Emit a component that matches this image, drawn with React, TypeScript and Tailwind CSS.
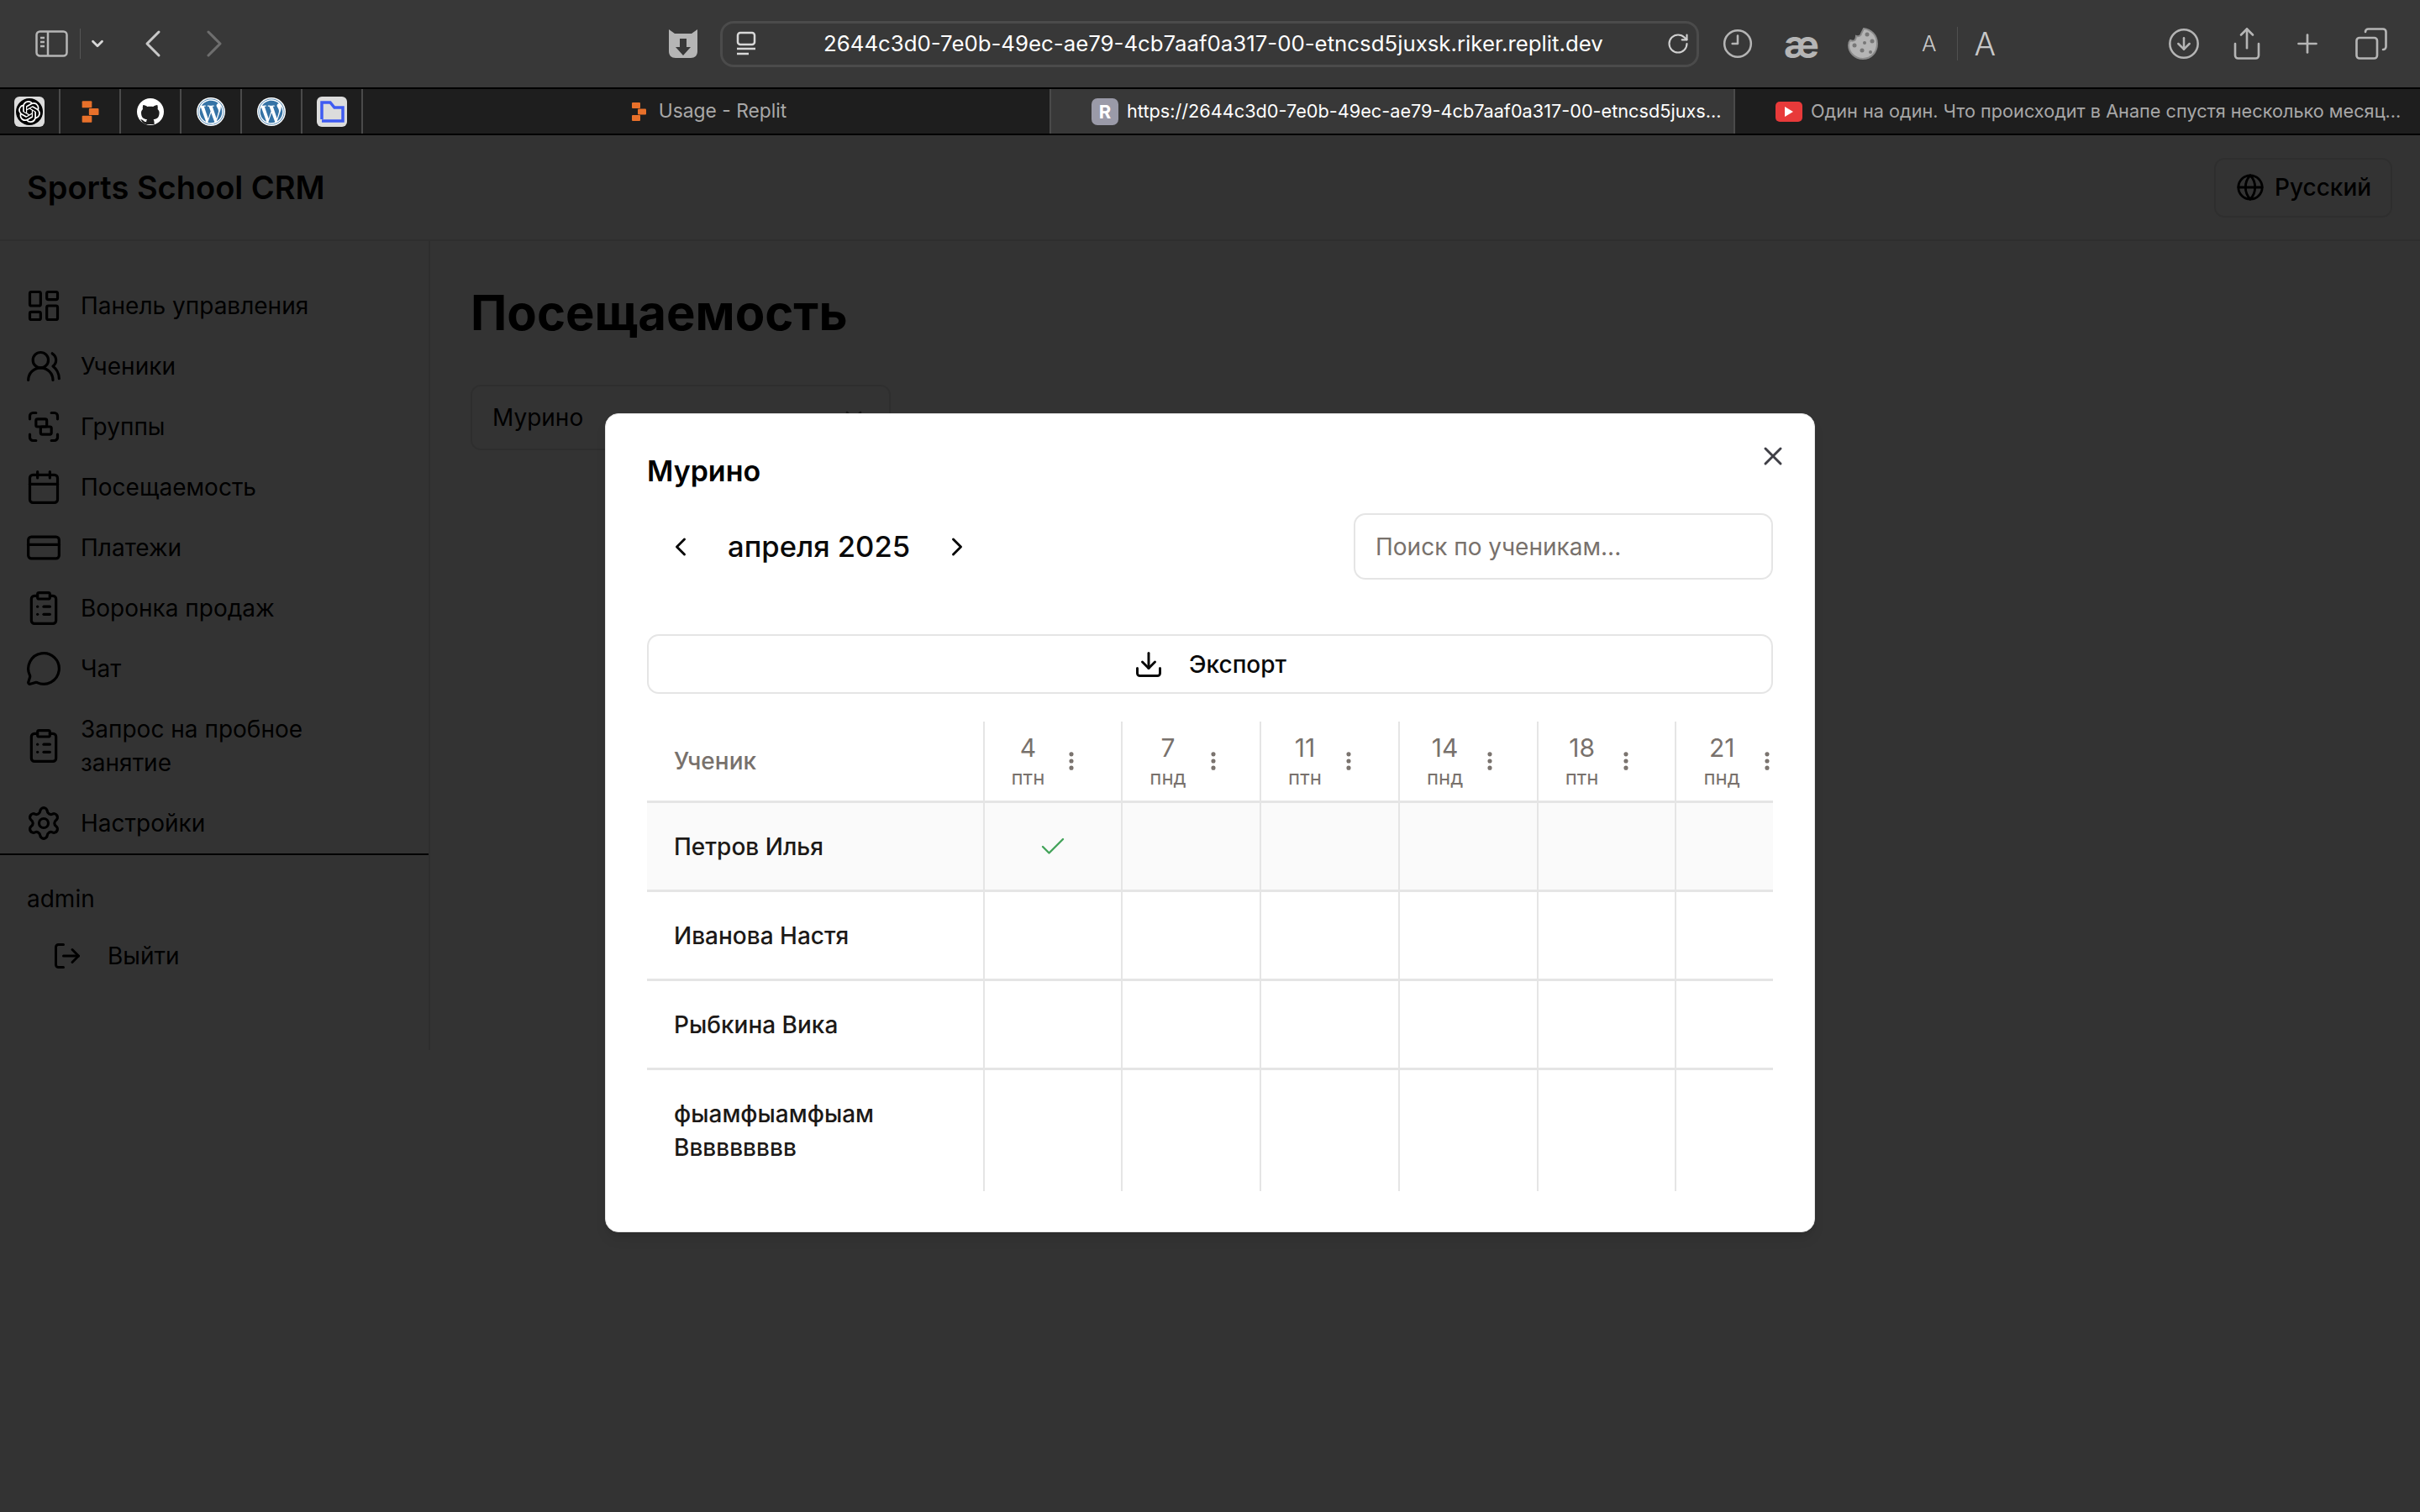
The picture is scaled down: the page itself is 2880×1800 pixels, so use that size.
import React from "react";
import {
  LayoutDashboard, UsersRound, Group, Calendar, CreditCard, ClipboardList, MessageCircle, Settings, LogOut, Globe,
  Download, MoreVertical, X, ChevronLeft, ChevronRight, ChevronDown, Check, RotateCw, Clock3, CircleArrowDown, Share, Plus, Copy,
} from "lucide-react";
import { FaWordpress } from "react-icons/fa";
import { SiOpenai } from "react-icons/si";

const font = { fontFamily: "Inter, 'Noto Sans', sans-serif" };

function ReplitIcon({ size = 24 }: { size?: number }) {
  return (
    <svg width={size} height={size} viewBox="0 0 24 24">
      <rect x="4" y="1" width="10" height="7" rx="1" fill="#e8702a" />
      <rect x="11" y="8.5" width="10" height="7" rx="1" fill="#e8702a" />
      <rect x="4" y="16" width="10" height="7" rx="1" fill="#e8702a" />
    </svg>
  );
}

function Wp() {
  return (
    <span className="flex h-[34px] w-[34px] items-center justify-center rounded-full bg-white">
      <FaWordpress size={32} color="#3573a6" />
    </span>
  );
}

function Pinned({ children }: { children: React.ReactNode }) {
  return <div className="flex h-full w-[72px] shrink-0 items-center justify-center border-r-2 border-[#4a4a4a]">{children}</div>;
}

function Toolbar() {
  const c = "#b5b5b5";
  return (
    <div className="flex h-[104px] items-center bg-[#383838]">
      <div className="flex w-[857px] shrink-0 items-center pl-[42px]">
        <svg width="39" height="32" viewBox="0 0 39 32" fill="none" stroke={c} strokeWidth="2.5">
          <rect x="1.5" y="1.5" width="36" height="29" rx="4" />
          <path d="M15 2v28M6 9h5M6 14h5M6 19h5" />
        </svg>
        <div className="ml-[14px] h-[36px] w-[1px] bg-[#555]" />
        <ChevronDown size={22} color="#d8d8d8" strokeWidth={3} className="ml-[9px]" />
        <ChevronLeft size={56} color="#c8c8c8" strokeWidth={1.3} className="ml-[27px]" />
        <ChevronRight size={56} color="#6e6e6e" strokeWidth={1.3} className="ml-[17px]" />
        <div className="ml-auto mr-[26px]">
          <svg width="36" height="36" viewBox="0 0 36 36">
            <path d="M1 1l7 5h20l7-5v26c0 5-3 8-8 8H9c-5 0-8-3-8-8z" fill={c} />
            <path d="M14 12h8v10h5l-9 10-9-10h5z" fill="#383838" />
          </svg>
        </div>
      </div>
      <div className="flex h-[55px] w-[1165px] shrink-0 items-center rounded-[16px] border-[3px] border-[#4b4b4b]">
        <svg width="24" height="30" viewBox="0 0 24 30" fill="none" stroke="#d8d8d8" strokeWidth="2.5" className="ml-[16px] shrink-0">
          <rect x="2" y="2" width="20" height="14" rx="3" />
          <path d="M1 21h22M1 27h14" />
        </svg>
        <span className="ml-[80px] whitespace-nowrap text-[25.8px] font-normal leading-none text-white" style={font}>
          2644c3d0-7e0b-49ec-ae79-4cb7aaf0a317-00-etncsd5juxsk.riker.replit.dev
        </span>
        <RotateCw size={28} color="#d0d0d0" strokeWidth={1.8} className="ml-auto mr-[8px]" />
      </div>
      <div className="flex flex-1 items-center">
        <Clock3 size={38} color={c} strokeWidth={1.6} className="ml-[27px] -scale-x-100" />
        <span className="ml-[32px] w-[50px] text-center text-[46px] font-bold leading-none text-[#b5b5b5]" style={font}>æ</span>
        <svg width="38" height="40" viewBox="0 0 38 40" className="ml-[29px]">
          <path d="M20 2c9 1 16 8 16 18 0 10-7 18-17 18S2 30 2 22c0-3 1-5 2-6 2 1 5 1 6-1s1-3 1-4c3 1 6-1 6-3 1-2 2-4 3-6z" fill={c} stroke="#8a8a8a" strokeWidth="2" />
          <g fill="#777"><circle cx="24" cy="9" r="2.5" /><circle cx="30" cy="17" r="2.5" /><circle cx="21" cy="19" r="2" /><circle cx="9" cy="22" r="2.5" /><circle cx="18" cy="28" r="2.5" /><circle cx="28" cy="30" r="2" /></g>
        </svg>
        <span className="ml-[51px] text-[26px] font-light leading-none text-[#c8c8c8]" style={font}>A</span>
        <div className="ml-[24px] h-[40px] w-[1px] bg-[#505050]" />
        <span className="ml-[20px] text-[38px] font-light leading-none text-[#c8c8c8]" style={font}>A</span>
        <CircleArrowDown size={40} color={c} strokeWidth={1.5} className="ml-[204px]" />
        <Share size={42} color={c} strokeWidth={1.5} className="ml-[34px]" />
        <Plus size={36} color={c} strokeWidth={1.8} className="ml-[33px]" />
        <Copy size={42} color={c} strokeWidth={1.5} className="ml-[37px] -scale-x-100" />
      </div>
    </div>
  );
}

function Tabs() {
  return (
    <div className="flex h-[57px] border-y-2 border-black bg-[#1e1e1e]" style={font}>
      <Pinned>
        <span className="flex h-[36px] w-[36px] items-center justify-center rounded-[6px] bg-[#dcdcdc]">
          <span className="flex h-[32px] w-[32px] items-center justify-center rounded-full bg-black">
            <SiOpenai size={26} color="white" />
          </span>
        </span>
      </Pinned>
      <Pinned><ReplitIcon size={28} /></Pinned>
      <Pinned>
        <span className="flex h-[32px] w-[32px] items-center justify-center overflow-hidden rounded-full bg-white">
          <svg width="32" height="32" viewBox="0 0 32 32"><path d="M11 31c0-3 0-4 1-6-4 0-7-2-7-8 0-2 1-3 2-4-.3-1-.3-3 .3-5 2 0 4 1 5 2 2-.5 5-.5 7 0 1-1 3-2 5-2 .6 2 .6 4 .3 5 1 1 2 2 2 4 0 6-3 8-7 8 1 2 1 3 1 6zM4 25c2 0 3 1 4 2s2 1 3 1v3c-3 0-4-1-5-3-.5-1-1-2-2-3z" fill="#1e1e1e" /></svg>
        </span>
      </Pinned>
      <Pinned><Wp /></Pinned>
      <Pinned><Wp /></Pinned>
      <Pinned>
        <span className="flex h-[36px] w-[36px] items-center justify-center rounded-[6px] bg-[#dcdcdc]">
          <svg width="30" height="26" viewBox="0 0 30 26" fill="none" stroke="#3f5bf2" strokeWidth="3.5">
            <path d="M3 22V2h10l5 6h10v16H3" />
          </svg>
        </span>
      </Pinned>
      <div className="flex h-full w-[817px] shrink-0 items-center justify-center gap-[12px] pl-[3px] text-[22.8px] text-[#a8a8a8]">
        <ReplitIcon size={24} />
        <span className="whitespace-nowrap">Usage - Replit</span>
      </div>
      <div className="flex h-full w-[816px] shrink-0 items-center gap-[10px] border-x-2 border-[#4a4a4a] bg-[#383838] pl-[48px] text-[21.7px] text-white">
        <span className="flex h-[32px] w-[32px] shrink-0 items-center justify-center rounded-[7px] bg-[#9a9aa8] text-[22px] font-bold leading-none text-white">R</span>
        <span className="whitespace-nowrap">https://2644c3d0-7e0b-49ec-ae79-4cb7aaf0a317-00-etncsd5juxs...</span>
      </div>
      <div className="flex h-full min-w-0 flex-1 items-center gap-[10px] pl-[48px] text-[21.7px] text-[#a8a8a8]">
        <span className="flex h-[24px] w-[32px] shrink-0 items-center justify-center rounded-[5px] bg-[#e83a3a]">
          <svg width="10" height="12" viewBox="0 0 10 12"><path d="M0 0l10 6-10 6z" fill="#fff" /></svg>
        </span>
        <span className="whitespace-nowrap">Один на один. Что происходит в Анапе спустя несколько месяц...</span>
      </div>
    </div>
  );
}

const nav = [
  [LayoutDashboard, "Панель управления"],
  [UsersRound, "Ученики"],
  [Group, "Группы"],
  [Calendar, "Посещаемость"],
  [CreditCard, "Платежи"],
  [ClipboardList, "Воронка продаж"],
  [MessageCircle, "Чат"],
  [ClipboardList, "Запрос на пробное занятие"],
  [Settings, "Настройки"],
] as const;

function Page() {
  return (
    <div className="h-full bg-white text-black" style={font}>
      <header className="flex h-[126px] items-center justify-between border-b-2 border-[#e5e5e5] pl-[32px] pr-[33px]">
        <h2 className="text-[38px] font-semibold leading-none">Sports School CRM</h2>
        <div className="flex h-[71px] w-[212px] items-center gap-[12px] rounded-[12px] border-2 border-[#e5e5e5] pl-[24px] text-[28px] font-medium">
          <Globe size={34} strokeWidth={2} />
          Русский
        </div>
      </header>
      <div className="flex">
        <aside className="h-[963px] w-[512px] shrink-0 border-r-2 border-[#e5e5e5]">
          <nav className="border-b-2 border-black pt-[41px]">
            {nav.map(([Icon, label]) => (
              <div key={label} className="flex items-center gap-[22px] py-[16px] pl-[30px] pr-[120px] text-[28px] font-normal leading-[40px]">
                <Icon size={44} strokeWidth={1.75} className="-my-[2px] shrink-0" />
                <span>{label}</span>
              </div>
            ))}
          </nav>
          <div className="pl-[32px] pt-[32px] text-[28px] leading-[40px]">admin</div>
          <div className="mt-[28px] flex items-center gap-[30px] pl-[62px] text-[28px] font-normal leading-[40px]">
            <LogOut size={36} strokeWidth={2} />
            Выйти
          </div>
        </aside>
        <main className="flex-1 pl-[48px] pt-[49px]">
          <h1 className="text-[58px] font-bold leading-[72px]">Посещаемость</h1>
          <div className="mt-[50px] flex h-[78px] w-[500px] items-center justify-between rounded-[12px] border-2 border-[#e5e5e5] pl-[24px] pr-[26px] text-[28px]">
            Мурино
            <ChevronDown size={32} className="-mt-[4px] opacity-50" />
          </div>
        </main>
      </div>
    </div>
  );
}

const dates = [
  ["4", "птн"], ["7", "пнд"], ["11", "птн"], ["14", "пнд"], ["18", "птн"], ["21", "пнд"],
];
const rows: [string[], string, boolean][] = [
  [["Петров Илья"], "h-[106px] bg-[#fafafa] border-b-[3px]", true],
  [["Иванова Настя"], "h-[106px] border-b-[3px]", false],
  [["Рыбкина Вика"], "h-[106px] border-b-[3px]", false],
  [["фыамфыамфыам", "Ввввввввв"], "h-[144px]", false],
];

function Modal() {
  return (
    <div className="absolute left-[720px] top-[331px] h-[975px] w-[1440px] rounded-[16px] border border-[#e5e5e5] bg-white px-[49px] pt-[46px] text-[#0a0a0a] shadow-lg" style={font}>
      <button className="absolute right-[31px] top-[32px] text-[#3f3f46]"><X size={36} strokeWidth={2} /></button>
      <h3 className="text-[34px] font-semibold leading-[44px] text-black">Мурино</h3>
      <div className="mt-[28px] flex h-[79px] items-center justify-between">
        <div className="flex items-center gap-[38px] pl-[22px]">
          <ChevronLeft size={36} strokeWidth={2} />
          <span className="text-[34.6px] font-medium leading-none">апреля 2025</span>
          <ChevronRight size={36} strokeWidth={2} />
        </div>
        <div className="flex h-[79px] w-[499px] items-center rounded-[14px] border-2 border-[#e5e5e5] pl-[24px] text-[28px] text-[#78716c]">
          Поиск по ученикам...
        </div>
      </div>
      <div className="mt-[65px] flex h-[71px] items-center justify-center gap-[30px] rounded-[14px] border-2 border-[#e5e5e5] text-[28px] font-medium">
        <Download size={36} strokeWidth={2} />
        Экспорт
      </div>
      <div className="mt-[33px] overflow-hidden">
        <div className="flex h-[97px] w-[1400px] border-b-[3px] border-[#e5e5e5]">
          <div className="flex w-[399.5px] items-center pl-[32px] text-[28px] font-medium text-[#78716c]">Ученик</div>
          {dates.map(([d, w]) => (
            <div key={d} className="flex w-[164.8px] items-center gap-[20px] border-l-2 border-[#e5e5e5] pl-[32px] text-[#78716c]">
              <div className="flex flex-col items-center pt-[2px]">
                <span className="text-[30px] font-normal leading-[37px]">{d}</span>
                <span className="text-[24px] font-normal leading-[33px]">{w}</span>
              </div>
              <MoreVertical size={28} strokeWidth={2.4} className="-ml-[2px] shrink-0" />
            </div>
          ))}
        </div>
        {rows.map(([lines, cls, checked]) => (
          <div key={lines[0]} className={`flex w-[1400px] border-[#e5e5e5] ${cls}`}>
            <div className="flex w-[399.5px] flex-col justify-center pl-[32px] text-[28px] font-medium leading-[40px] text-[#1c1917]">
              {lines.map((l) => <span key={l}>{l}</span>)}
            </div>
            {dates.map(([d], i) => (
              <div key={d} className="flex w-[164.8px] items-center border-l-2 border-[#e5e5e5] pl-[63px]">
                {checked && i === 0 ? <Check size={36} color="#43a35a" strokeWidth={1.6} /> : null}
              </div>
            ))}
          </div>
        ))}
      </div>
    </div>
  );
}

export default function App() {
  return (
    <div className="flex h-[1800px] w-[2880px] flex-col overflow-hidden">
      <Toolbar />
      <Tabs />
      <div className="relative flex-1">
        <Page />
        <div className="absolute inset-0 bg-black/80" />
        <Modal />
      </div>
    </div>
  );
}
